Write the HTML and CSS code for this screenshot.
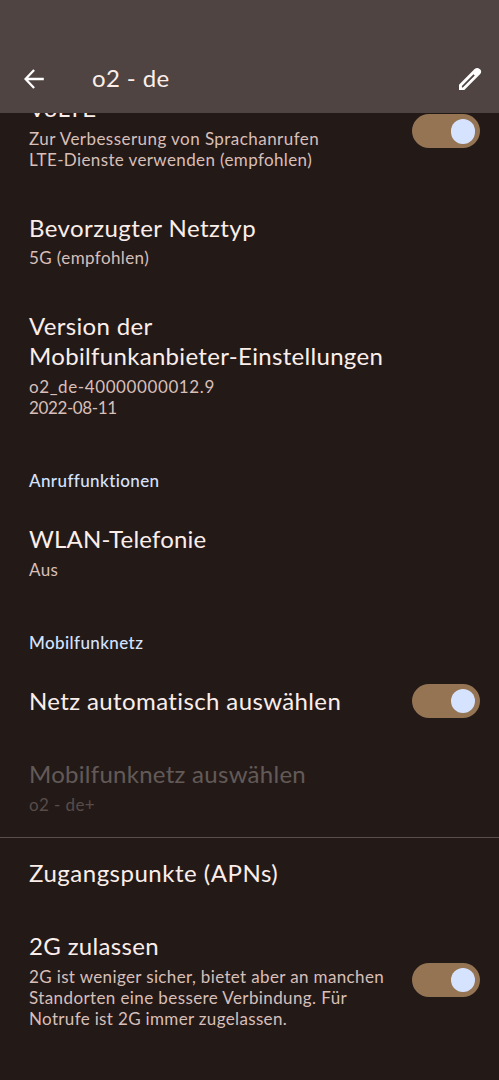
FILE: index.html
```html
<!DOCTYPE html>
<html lang="de">
<head>
<meta charset="utf-8">
<title>o2 - de</title>
<link rel="stylesheet" href="styles.css">
</head>
<body>
<div class="screen">
  <header class="appbar">
    <svg class="back" viewBox="0 0 20 20"><path d="M10.100 1 1.500 10l8.600 9M1.700 10H19.800"/></svg>
    <h1 class="appbar-title">o2 - de</h1>
    <svg class="edit" viewBox="0 0 24 24"><path fill-rule="evenodd" d="M1 23v-5.300L16.600 2.100Q19.200-.2 21.600 1.900L22.300 2.600Q24.200 4.900 22 7.300L6.300 23zM3.900 20.500h.9L16.800 8.500l-1.300-1.300L3.900 19z"/></svg>
  </header>
  <main class="list">
    <section class="item">
      <div class="text">
        <h2 class="title">VoLTE</h2>
        <p class="summary"><span class="t-volte1">Zur Verbesserung von Sprachanrufen</span><br><span class="t-volte2">LTE-Dienste verwenden (empfohlen)</span></p>
      </div>
      <span class="switch"><span class="thumb"></span></span>
    </section>
    <section class="item">
      <div class="text">
        <h2 class="title t-type">Bevorzugter Netztyp</h2>
        <p class="summary">5G (empfohlen)</p>
      </div>
    </section>
    <section class="item">
      <div class="text">
        <h2 class="title t-version">Version der<br>Mobilfunkanbieter-Einstellungen</h2>
        <p class="summary"><span class="t-build">o2_de-40000000012.9</span><br><span class="t-date">2022-08-11</span></p>
      </div>
    </section>
    <h3 class="category category-calls">Anruffunktionen</h3>
    <section class="item">
      <div class="text">
        <h2 class="title t-wlan">WLAN-Telefonie</h2>
        <p class="summary">Aus</p>
      </div>
    </section>
    <h3 class="category">Mobilfunknetz</h3>
    <section class="item">
      <div class="text"><h2 class="title t-auto">Netz automatisch auswählen</h2></div>
      <span class="switch"><span class="thumb"></span></span>
    </section>
    <section class="item disabled">
      <div class="text">
        <h2 class="title t-select">Mobilfunknetz auswählen</h2>
        <p class="summary">o2 - de+</p>
      </div>
    </section>
    <section class="item divided">
      <div class="text"><h2 class="title t-apn">Zugangspunkte (APNs)</h2></div>
    </section>
    <section class="item">
      <div class="text">
        <h2 class="title t-2g">2G zulassen</h2>
        <p class="summary"><span class="t-2g1">2G ist weniger sicher, bietet aber an manchen</span><br>Standorten eine bessere Verbindung. Für<br><span class="t-2g3">Notrufe ist 2G immer zugelassen.</span></p>
      </div>
      <span class="switch"><span class="thumb"></span></span>
    </section>
  </main>
</div>
</body>
</html>
```
FILE: styles.css
```css
* { box-sizing: border-box; }
body { margin: 0; background: #231a18; font-family: Lato, "Open Sans", sans-serif; }
h1, h2, h3, p { margin: 0; font-weight: 400; }
.screen { height: 1080px; overflow: hidden; }

.appbar {
  position: relative;
  z-index: 1;
  height: 113px;
  padding: 45px 17px 0 24px;
  display: flex;
  align-items: flex-start;
  background: #4f4441;
  color: #fbeeea;
}
.back { width: 20px; height: 20px; margin: 24px 48px 0 0; fill: none; stroke: #fff; stroke-width: 2.3; }
.appbar-title { flex: 1; font-size: 24px; line-height: 66px; letter-spacing: .38px; }
.edit { width: 24px; height: 24px; margin-top: 22px; fill: #fff; }

/* The list is scrolled so its first row starts beneath the app bar. */
.list { margin-top: -41px; }
.item {
  display: flex;
  align-items: center;
  justify-content: space-between;
  padding: 21px 19.5px 22px 29px;
}
.title { font-size: 24px; line-height: 30px; letter-spacing: .35px; color: #fbeeea; white-space: nowrap; }
.summary { margin-top: 4.5px; font-size: 17px; line-height: 21px; letter-spacing: .4px; color: #d8bfb8; white-space: nowrap; }
.category {
  height: 63px;
  padding: 30px 29px 0;
  font-size: 17px;
  line-height: 21px;
  font-weight: 500;
  letter-spacing: .4px;
  color: #d6e3ff;
}
.category-calls { height: 63.5px; }
.disabled { padding-bottom: 22.5px; }
.disabled .title { color: #635a58; }
.disabled .summary { margin-top: 5px; color: #584c49; }
.divided { border-top: 1.5px solid #5b4e4b; padding-top: 19.5px; padding-bottom: 22.5px; }

.switch {
  width: 68px;
  height: 34px;
  margin: -2px 0;
  padding: 5px 4.5px;
  border-radius: 17px;
  display: flex;
  justify-content: flex-end;
  background: #947453;
}
.thumb { width: 24.5px; height: 24.5px; border-radius: 50%; background: #d6e3ff; }

/* Per-label tracking */
.t-volte1 { letter-spacing: .45px; }
.t-volte2 { letter-spacing: .38px; }
.t-type { letter-spacing: .43px; }
.t-version { letter-spacing: .32px; }
.t-build { letter-spacing: .6px; }
.t-date { letter-spacing: -.38px; }
.t-wlan { letter-spacing: .18px; }
.t-auto { letter-spacing: .38px; }
.t-select { letter-spacing: .27px; }
.t-apn { letter-spacing: .51px; }
.t-2g1 { letter-spacing: .36px; }
.t-2g3 { letter-spacing: .34px; }
```
